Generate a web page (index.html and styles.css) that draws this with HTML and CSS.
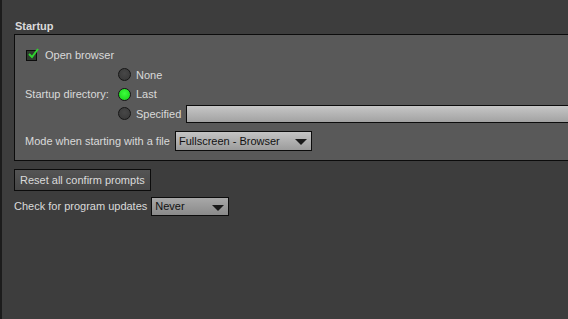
FILE: index.html
```html
<!DOCTYPE html>
<html lang="en">
<head>
    <meta charset="UTF-8">
    <title>Preferences - General</title>
    <link rel="stylesheet" href="styles.css">
</head>
<body>
    <div class="edge"></div>

    <div class="page">
        <div class="group-title">Startup</div>

        <div class="group">
            <label class="check-row">
                <span class="checkbox">
                    <svg width="14" height="14" viewBox="0 0 14 14">
                        <path d="M3 7 L6 10 L12 2" fill="none" stroke="#2fd22f" stroke-width="2"/>
                    </svg>
                </span>
                Open browser
            </label>

            <div class="dir-block">
                <div class="dir-label">Startup directory:</div>
                <div class="radios">
                    <div class="radio-row"><span class="radio"></span>None</div>
                    <div class="radio-row"><span class="radio on"></span>Last</div>
                    <div class="radio-row"><span class="radio"></span>Specified<span class="path-input"></span></div>
                </div>
            </div>

            <div class="mode-row">
                Mode when starting with a file
                <div class="dropdown wide">Fullscreen - Browser<span class="arrow"></span></div>
            </div>
        </div>

        <button class="btn">Reset all confirm prompts</button>

        <div class="update-row">
            Check for program updates
            <div class="dropdown small">Never<span class="arrow"></span></div>
        </div>
    </div>
</body>
</html>
```

FILE: styles.css
```css
:root {
    --fundo: #3d3d3d;
    --painel: #595959;
    --texto: #dadada;
    --borda: #0c0c0c;
}

* {
    margin: 0;
    padding: 0;
    box-sizing: border-box;
}

body {
    width: 568px;
    height: 319px;
    overflow: hidden;
    display: flex;
    background-color: var(--fundo);
    color: var(--texto);
    font-family: "Liberation Sans", Arial, sans-serif;
    font-size: 11px;
}

.edge {
    width: 2px;
    flex-shrink: 0;
    background-color: #1c1c1c;
}

.page {
    flex: 1;
    padding: 19px 0 0 12px;
}

.group-title {
    font-weight: bold;
    height: 15px;
    line-height: 15px;
    padding-left: 1px;
}

.group {
    margin-right: -20px;
    background-color: var(--painel);
    border: 1px solid var(--borda);
    padding: 10px 10px 9px 10px;
}

.check-row {
    display: flex;
    align-items: center;
    height: 20px;
    gap: 8px;
}

.checkbox {
    position: relative;
    width: 11px;
    height: 11px;
    margin-left: 1px;
    background-color: #2e3a2e;
    border: 1px solid var(--borda);
}

.checkbox svg {
    position: absolute;
    left: -1px;
    top: -4px;
}

.dir-block {
    display: flex;
    align-items: center;
}

.dir-label {
    width: 93px;
    white-space: nowrap;
}

.radios {
    flex: 1;
}

.radio-row {
    display: flex;
    align-items: center;
    height: 19.5px;
    gap: 5px;
}

.radio {
    width: 13px;
    height: 13px;
    border-radius: 50%;
    border: 1px solid #151515;
    background: radial-gradient(circle at 50% 40%, #474747, #363636);
}

.radio.on {
    background: radial-gradient(circle at 50% 40%, #3cff3c, #14cc14);
}

.path-input {
    flex: 1;
    height: 18px;
    margin-left: 0;
    border: 1px solid var(--borda);
    background: linear-gradient(#c6c6c6, #a2a2a2);
}

.mode-row,
.update-row {
    display: flex;
    align-items: center;
    gap: 5px;
    white-space: nowrap;
}

.mode-row {
    margin-top: 7px;
}

.dropdown {
    position: relative;
    height: 20px;
    line-height: 18px;
    padding-left: 3px;
    color: #111111;
    border: 1px solid var(--borda);
    background: linear-gradient(#c4c4c4, #9c9c9c);
}

.dropdown.wide {
    width: 137px;
}

.dropdown.small {
    width: 78px;
    height: 19px;
    line-height: 17px;
    background: linear-gradient(#a8a8a8, #8a8a8a);
}

.arrow {
    position: absolute;
    right: 4px;
    top: 7px;
    width: 0;
    height: 0;
    border-left: 6px solid transparent;
    border-right: 6px solid transparent;
    border-top: 6px solid #1a1a1a;
}

.btn {
    display: block;
    margin-top: 8px;
    height: 22px;
    padding: 0 5px;
    font-family: inherit;
    font-size: 11px;
    color: var(--texto);
    border: 1px solid var(--borda);
    background: linear-gradient(#545454, #464646);
}

.update-row {
    margin-top: 6px;
    gap: 4px;
}
```
